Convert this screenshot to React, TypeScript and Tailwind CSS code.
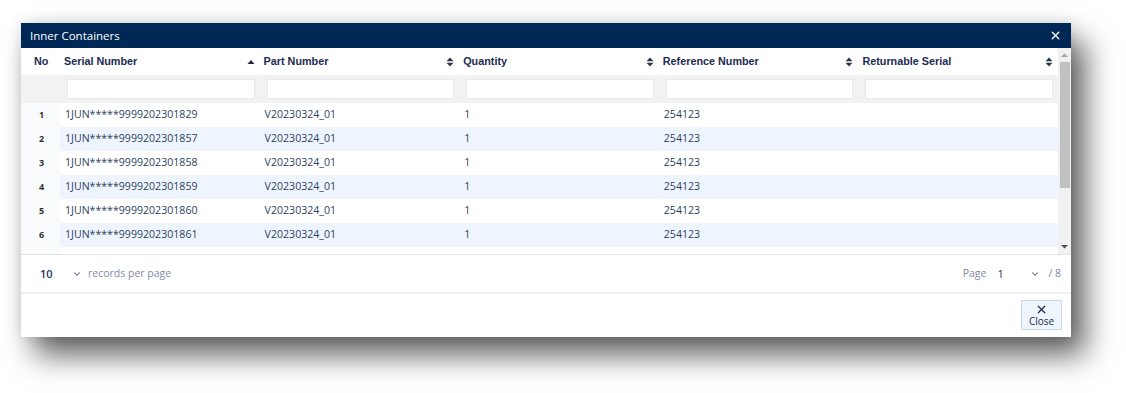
import { X, ChevronDown } from "lucide-react";

const rows = [
  { no: 1, serial: "1JUN*****9999202301829" },
  { no: 2, serial: "1JUN*****9999202301857" },
  { no: 3, serial: "1JUN*****9999202301858" },
  { no: 4, serial: "1JUN*****9999202301859" },
  { no: 5, serial: "1JUN*****9999202301860" },
  { no: 6, serial: "1JUN*****9999202301861" },
  { no: 7, serial: "1JUN*****9999202301862" },
  { no: 8, serial: "1JUN*****9999202301863" },
];

const columns = ["Serial Number", "Part Number", "Quantity", "Reference Number", "Returnable Serial"];

const grid = "grid grid-cols-[39px_repeat(5,minmax(0,1fr))]";

function SortIcon({ active }: { active?: boolean }) {
  if (active) {
    return (
      <svg width="8" height="8" viewBox="0 0 8 8" className="shrink-0">
        <path d="M0.5 6 L4 2 L7.5 6 Z" fill="#1e2a44" />
      </svg>
    );
  }
  return (
    <svg width="8" height="10" viewBox="0 0 8 10" className="shrink-0">
      <path d="M0.5 4.3 L4 0.5 L7.5 4.3 Z" fill="#2b3447" />
      <path d="M0.5 5.7 L4 9.5 L7.5 5.7 Z" fill="#2b3447" />
    </svg>
  );
}

export default function App() {
  return (
    <div className="w-[1126px] h-[393px] bg-white relative overflow-hidden font-['Open_Sans',sans-serif]">
      <div className="absolute left-[21px] top-[23px] w-[1050px] h-[314px] bg-white flex flex-col shadow-[14px_18px_28px_rgba(0,0,0,0.62),0_0_14px_rgba(0,0,0,0.12)]">
        {/* Title bar */}
        <div className="h-[25px] bg-[#002856] flex items-center justify-between pl-[9px] pr-[9px] shrink-0">
          <span className="text-white text-[11.5px] leading-none">Inner Containers</span>
          <X className="w-[13px] h-[13px] text-white" strokeWidth={2.5} />
        </div>

        {/* Table + scrollbar */}
        <div className="flex h-[207px] shrink-0 border-b border-[#e3e3e3]">
          <div className="flex-1 flex flex-col overflow-hidden">
            {/* Header */}
            <div className={`${grid} h-[27px] shrink-0 font-['Liberation_Sans',sans-serif] font-bold text-[10.8px] text-[#1b2b52]`}>
              <div className="flex items-center pl-[13px]">No</div>
              {columns.map((c, i) => (
                <div key={c} className="flex items-center justify-between pl-[4px] pr-[5px]">
                  <span>{c}</span>
                  <SortIcon active={i === 0} />
                </div>
              ))}
            </div>
            {/* Filter row */}
            <div className={`${grid} h-[28px] shrink-0 bg-[#f2f2f2] items-center`}>
              <div />
              {columns.map((c) => (
                <div key={c} className="pl-[7px] pr-[5px]">
                  <div className="h-[20px] bg-white border border-[#e9e9e9]" />
                </div>
              ))}
            </div>
            {/* Body */}
            <div className="flex-1 overflow-hidden">
              {rows.map((r) => (
                <div key={r.no} className={`${grid} h-[24px] text-[10.6px] text-[#2e3e5c]`}>
                  <div className="flex items-center justify-center bg-[#fafbfc] text-[9px] font-bold text-[#333] pl-[2px]">{r.no}</div>
                  <div className={`col-span-5 grid grid-cols-5 items-center ${r.no % 2 === 0 ? "bg-[#eef5fe]" : "bg-white"}`}>
                    <span className="pl-[5px]">{r.serial}</span>
                    <span className="pl-[5px]">V20230324_01</span>
                    <span className="pl-[5px]">1</span>
                    <span className="pl-[5px]">254123</span>
                    <span />
                  </div>
                </div>
              ))}
            </div>
          </div>
          {/* Scrollbar */}
          <div className="w-[13px] bg-[#f1f1f1] flex flex-col items-center pt-[3px] pb-[3px]">
            <svg width="7" height="5" viewBox="0 0 7 5" className="mt-[2px]">
              <path d="M0 4 L3.5 0.5 L7 4 Z" fill="#a3a3a3" />
            </svg>
            <div className="w-[10px] h-[126px] bg-[#c1c1c1] mt-[4px]" />
            <div className="flex-1" />
            <svg width="7" height="5" viewBox="0 0 7 5" className="mb-[2px]">
              <path d="M0 1 L3.5 4.5 L7 1 Z" fill="#505050" />
            </svg>
          </div>
        </div>

        {/* Pagination */}
        <div className="h-[37px] shrink-0 flex items-center justify-between pl-[19px] pr-[10px] text-[11px] pt-[1px]">
          <div className="flex items-center">
            <span className="text-[#1f3460] font-semibold w-[32px]">10</span>
            <ChevronDown className="w-[10px] h-[10px] text-[#55607a]" strokeWidth={2.5} />
            <span className="ml-[6px] text-[10.5px] text-[#7f8ca6]">records per page</span>
          </div>
          <div className="flex items-center">
            <span className="text-[10.5px] text-[#7f8ca6]">Page</span>
            <span className="ml-[11px] text-[#1f3460] w-[33px]">1</span>
            <ChevronDown className="w-[10px] h-[10px] text-[#55607a]" strokeWidth={2.5} />
            <span className="ml-[8px] text-[10.5px] text-[#7f8ca6]">/ 8</span>
          </div>
        </div>
        <div className="h-[2px] bg-[#f0f0f0] shrink-0" />

        {/* Footer */}
        <div className="flex-1 flex items-start justify-end pr-[9px] pt-[6px]">
          <button className="w-[41px] h-[30px] bg-[#eef5fd] border border-[#cfd9e6] flex flex-col items-center justify-center text-[#1b2b52]">
            <X className="w-[13px] h-[13px]" strokeWidth={2.2} />
            <span className="text-[10px] leading-[11px]">Close</span>
          </button>
        </div>
      </div>
    </div>
  );
}
